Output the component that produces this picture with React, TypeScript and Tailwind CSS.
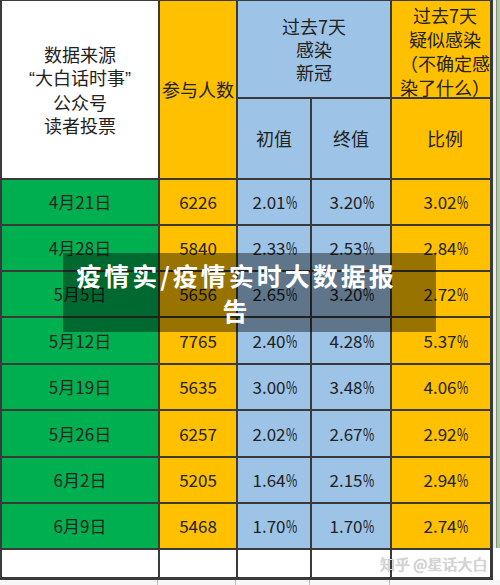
import React from "react";

const rows = [
  ["4月21日", "6226", "2.01", "3.20", "3.02"],
  ["4月28日", "5840", "2.33", "2.53", "2.84"],
  ["5月5日", "5656", "2.65", "3.20", "2.72"],
  ["5月12日", "7765", "2.40", "4.28", "5.37"],
  ["5月19日", "5635", "3.00", "3.48", "4.06"],
  ["5月26日", "6257", "2.02", "2.67", "2.92"],
  ["6月2日", "5205", "1.64", "2.15", "2.94"],
  ["6月9日", "5468", "1.70", "1.70", "2.74"],
];

const font = { fontFamily: '"Noto Sans CJK SC", "Noto Sans", sans-serif' };

function Pct({ v }: { v: string }) {
  return (
    <span className="whitespace-nowrap">
      {v}
      <span className="inline-block w-[10px] origin-left scale-x-[0.72]">%</span>
    </span>
  );
}

export default function App() {
  const cell = "flex items-center justify-center text-[17px] text-[#222]";
  return (
    <div className="relative w-[500px] h-[585px] overflow-hidden bg-white" style={font}>
      <div className="flex">
        <div className="w-[493px] bg-[#3a3a3a] pl-[2px] pt-[1px] pr-[3px] pb-[3px]">
          <div className="grid grid-cols-[156px_76px_72px_78px_98px] grid-rows-[96px_79px_44px_44px_44px_45px_44px_45px_44px_44px_27px] gap-[2px]">
            <div className="row-span-2 bg-white flex items-center justify-center text-center text-[18px] leading-[23px] text-[#222]">
              <div>
                数据来源
                <br />
                <span style={{ fontFamily: '"Liberation Sans", sans-serif' }}>“</span>大白话时事<span style={{ fontFamily: '"Liberation Sans", sans-serif' }}>”</span>
                <br />
                公众号
                <br />
                读者投票
              </div>
            </div>
            <div className="row-span-2 bg-[#ffc000] flex items-center justify-center text-[18px] text-[#222]">参与人数</div>
            <div className="col-span-2 bg-[#9dc3e6] flex items-center justify-center text-center text-[18px] leading-[23px] text-[#222]">
              <div>
                过去7天
                <br />
                感染
                <br />
                新冠
              </div>
            </div>
            <div className="bg-[#ffc000] flex items-start justify-center pl-[8px] pt-[2px] text-center text-[18px] leading-[24px] text-[#222] overflow-hidden whitespace-nowrap">
              <div>
                过去7天
                <br />
                疑似感染
                <br />
                （不确定感
                <br />
                染了什么）
              </div>
            </div>
            <div className="bg-[#9dc3e6] flex items-center justify-center text-[18px] text-[#222]">初值</div>
            <div className="bg-[#9dc3e6] flex items-center justify-center text-[18px] text-[#222]">终值</div>
            <div className="bg-[#ffc000] flex items-center justify-center pl-[8px] text-[18px] text-[#222]">比例</div>
            {rows.map((r) => (
              <React.Fragment key={r[0]}>
                <div className={`${cell} bg-[#00b050]`}>{r[0]}</div>
                <div className={`${cell} bg-[#ffc000]`}>{r[1]}</div>
                <div className={`${cell} bg-[#9dc3e6]`}>
                  <Pct v={r[2]} />
                </div>
                <div className={`${cell} bg-[#9dc3e6]`}>
                  <Pct v={r[3]} />
                </div>
                <div className={`${cell} bg-[#ffc000] pl-[8px]`}>
                  <Pct v={r[4]} />
                </div>
              </React.Fragment>
            ))}
            <div className="bg-white" />
            <div className="bg-white" />
            <div className="bg-white" />
            <div className="bg-white" />
            <div className="bg-white" />
          </div>
        </div>
        <div className="w-[7px] flex flex-col">
          <div className="h-[548px] flex">
            <div className="w-[3px] bg-[#ececec]" />
            <div className="w-[1px] bg-[#8a8a8a]" />
            <div className="w-[3px] bg-[#a9d18e]" />
          </div>
          <div className="flex-1 bg-white" />
        </div>
      </div>
      <div className="flex h-[5px] bg-[#f7f7f7]">
        <div className="w-[158px] border-r border-[#bdbdbd]" />
        <div className="w-[78px] border-r border-[#bdbdbd]" />
        <div className="w-[74px] border-r border-[#bdbdbd]" />
        <div className="w-[80px] border-r border-[#bdbdbd]" />
        <div className="flex-1" />
      </div>

      <div className="absolute left-[63px] top-[253px] w-[373px] h-[79px] bg-black/40">
        <div className="w-[338px] pl-[9px] pt-[5px] text-center text-white font-bold text-[25px] leading-[35px] tracking-[3px]">
          疫情实/疫情实时大数据报告
        </div>
      </div>

      <div
        className="absolute left-[380px] top-[554px] text-[15px] leading-[20px] text-[#d6d6d6] whitespace-nowrap"
        style={{ textShadow: "0 0 1px rgba(0,0,0,0.35)" }}
      >
        知乎 @星话大白
      </div>
    </div>
  );
}
